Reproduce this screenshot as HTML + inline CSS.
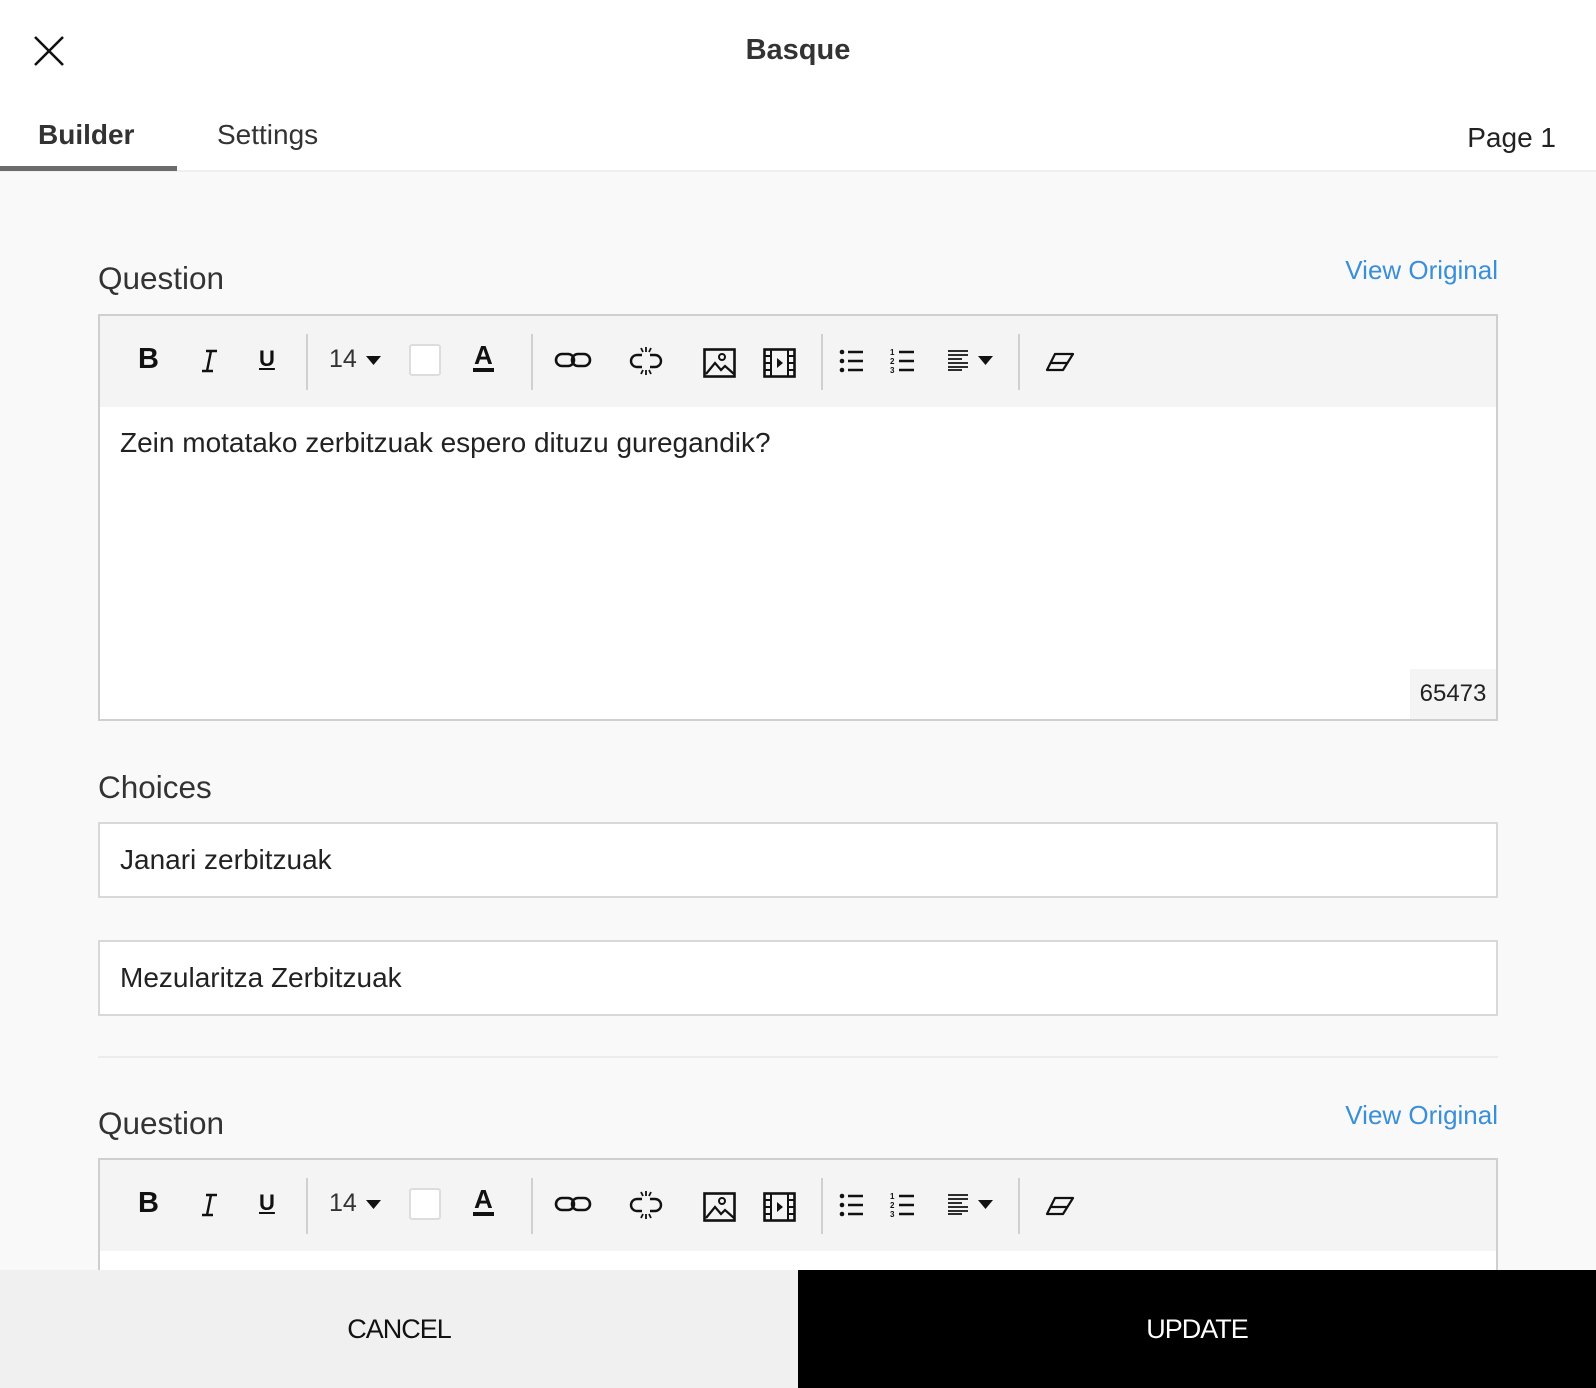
<!DOCTYPE html>
<html><head><meta charset="utf-8"><style>
*{box-sizing:border-box;margin:0;padding:0}
body{width:1596px;height:1388px;position:relative;overflow:hidden;background:#f9f9f9;font-family:"Liberation Sans",Arial,sans-serif;color:#333}
.a{position:absolute}
.hdr{left:0;top:0;width:1596px;height:172px;background:#fff;border-bottom:2px solid #efefef}
.lbl{font-size:31.5px;color:#333;left:98px}
.vo{font-size:26px;color:#3a8fd9;right:98px}
.ed{left:98px;width:1400px;border:2px solid #cfcfcf;background:#fff}
.tb{position:relative;height:91px;background:#f4f4f4}
.tb>*{position:absolute}
.sep{width:2px;height:56px;top:18px;background:#d0d0d0}
.inp{left:98px;width:1400px;height:76px;border:2px solid #d8d8d8;background:#fff;font-size:28px;padding-left:20px;line-height:72px;color:#222}
</style></head><body>
<div class="a hdr"></div>
<svg class="a" style="left:34px;top:36px" width="30" height="30" viewBox="0 0 30 30"><path d="M1 1L29 29M29 1L1 29" stroke="#111" stroke-width="2.6"/></svg>
<div class="a" style="left:0;width:1596px;top:34px;text-align:center;font-size:29px;font-weight:bold;color:#333">Basque</div>
<div class="a" style="left:38px;top:119px;font-size:28px;font-weight:bold;color:#333;line-height:32px">Builder</div>
<div class="a" style="left:0;top:166px;width:177px;height:5px;background:#6b6b6b"></div>
<div class="a" style="left:217px;top:119px;font-size:28px;color:#333;line-height:32px">Settings</div>
<div class="a" style="right:40px;top:122px;font-size:28px;color:#222">Page 1</div>

<div class="a lbl" style="top:260px">Question</div>
<div class="a vo" style="top:255px">View Original</div>
<div class="a ed" style="top:314px;height:407px">
 <div class="tb" id="t1"></div>
 <div style="padding:20px 0 0 20px;font-size:28px;color:#222">Zein motatako zerbitzuak espero dituzu guregandik?</div>
 <div class="a" style="right:0;bottom:0;width:86px;height:50px;background:#f4f4f4;font-size:24px;line-height:50px;text-align:center;color:#222">65473</div>
</div>

<div class="a lbl" style="top:769px">Choices</div>
<div class="a inp" style="top:822px">Janari zerbitzuak</div>
<div class="a inp" style="top:940px">Mezularitza Zerbitzuak</div>
<div class="a" style="left:98px;top:1056px;width:1400px;height:2px;background:#ececec"></div>

<div class="a lbl" style="top:1105px">Question</div>
<div class="a vo" style="top:1100px">View Original</div>
<div class="a ed" style="top:1158px;height:150px">
 <div class="tb" id="t2"></div>
</div>

<div class="a" style="left:0;top:1270px;width:798px;height:118px;background:#f0f0f0;text-align:center;line-height:118px;font-size:27px;color:#111;letter-spacing:-1px">CANCEL</div>
<div class="a" style="left:798px;top:1270px;width:798px;height:118px;background:#000;text-align:center;line-height:118px;font-size:27px;color:#fff;letter-spacing:-1px">UPDATE</div>

<template id="tpl">
 <div style="left:38px;top:27px;font-size:29px;font-weight:bold;color:#111">B</div>
 <svg style="left:99px;top:33px" width="22" height="24" viewBox="0 0 22 24"><path d="M12 2L8 22M7 2h11M3 22h11" stroke="#111" stroke-width="2.4"/></svg>
 <div style="left:159px;top:30px;font-size:22px;font-weight:bold;text-decoration:underline;color:#111">U</div>
 <div class="sep" style="left:206px"></div>
 <div style="left:229px;top:29px;font-size:25px;color:#333">14</div>
 <svg style="left:266px;top:40px" width="15" height="9"><path d="M0 0H15L7.5 9Z" fill="#111"/></svg>
 <div style="left:309px;top:28px;width:32px;height:32px;background:#fff;border:2px solid #ddd;border-radius:3px"></div>
 <div style="left:373px;top:26px;font-size:26px;font-weight:bold;color:#111;border-bottom:4px solid #111;line-height:26px;padding:0 1px">A</div>
 <div class="sep" style="left:431px"></div>
 <svg style="left:454px;top:36px" width="38" height="16" viewBox="0 0 38 16"><rect x="2" y="2" width="18" height="12" rx="6" fill="none" stroke="#111" stroke-width="2.6"/><rect x="18" y="2" width="18" height="12" rx="6" fill="none" stroke="#111" stroke-width="2.6"/></svg>
 <svg style="left:529px;top:30px" width="34" height="30" viewBox="0 0 34 30"><path d="M13 9H8a6 6 0 0 0 0 12h5M21 9h5a6 6 0 0 1 0 12h-5" fill="none" stroke="#111" stroke-width="2.4"/><path d="M17 1v5M12 2l2 4M22 2l-2 4M17 24v5M12 28l2-4M22 28l-2-4" stroke="#111" stroke-width="1.8"/></svg>
 <svg style="left:603px;top:32px" width="33" height="30" viewBox="0 0 33 30"><rect x="1.5" y="1.5" width="30" height="27" fill="none" stroke="#111" stroke-width="2.6"/><circle cx="19" cy="9" r="3" fill="none" stroke="#111" stroke-width="2"/><path d="M3 26l9-11 6 7 4-4 9 8" fill="none" stroke="#111" stroke-width="2.2"/></svg>
 <svg style="left:663px;top:32px" width="33" height="30" viewBox="0 0 33 30"><rect x="1.5" y="1.5" width="30" height="27" fill="none" stroke="#111" stroke-width="2.6"/><path d="M8 1v28M25 1v28M1 8h7M1 15h7M1 22h7M25 8h7M25 15h7M25 22h7" stroke="#111" stroke-width="2"/><path d="M14 10l6 5-6 5Z" fill="#111"/></svg>
 <div class="sep" style="left:721px"></div>
 <svg style="left:739px;top:32px" width="26" height="26" viewBox="0 0 26 26"><circle cx="3" cy="4" r="2.3" fill="#111"/><circle cx="3" cy="13" r="2.3" fill="#111"/><circle cx="3" cy="22" r="2.3" fill="#111"/><path d="M9 4h15M9 13h15M9 22h15" stroke="#111" stroke-width="2.4"/></svg>
 <svg style="left:790px;top:32px" width="26" height="26" viewBox="0 0 26 26"><text x="0" y="7" font-size="8" font-family="Liberation Sans" font-weight="bold" fill="#111">1</text><text x="0" y="16" font-size="8" font-family="Liberation Sans" font-weight="bold" fill="#111">2</text><text x="0" y="25" font-size="8" font-family="Liberation Sans" font-weight="bold" fill="#111">3</text><path d="M9 4h15M9 13h15M9 22h15" stroke="#111" stroke-width="2.4"/></svg>
 <svg style="left:848px;top:33px" width="22" height="22" viewBox="0 0 22 22"><path d="M0 2h20M0 6h20M0 10h14M0 14h20M0 18h20M0 21h14" stroke="#111" stroke-width="1.8"/></svg>
 <svg style="left:878px;top:40px" width="15" height="9"><path d="M0 0H15L7.5 9Z" fill="#111"/></svg>
 <div class="sep" style="left:918px"></div>
 <svg style="left:945px;top:36px" width="30" height="20" viewBox="0 0 30 20"><path d="M10 2h18l-10 16H2Z M6 11h17" fill="none" stroke="#111" stroke-width="2.2" stroke-linejoin="round"/></svg>
</template>
<script>
var t=document.getElementById('tpl').innerHTML;
document.getElementById('t1').innerHTML=t;document.getElementById('t2').innerHTML=t;
</script>
</body></html>
